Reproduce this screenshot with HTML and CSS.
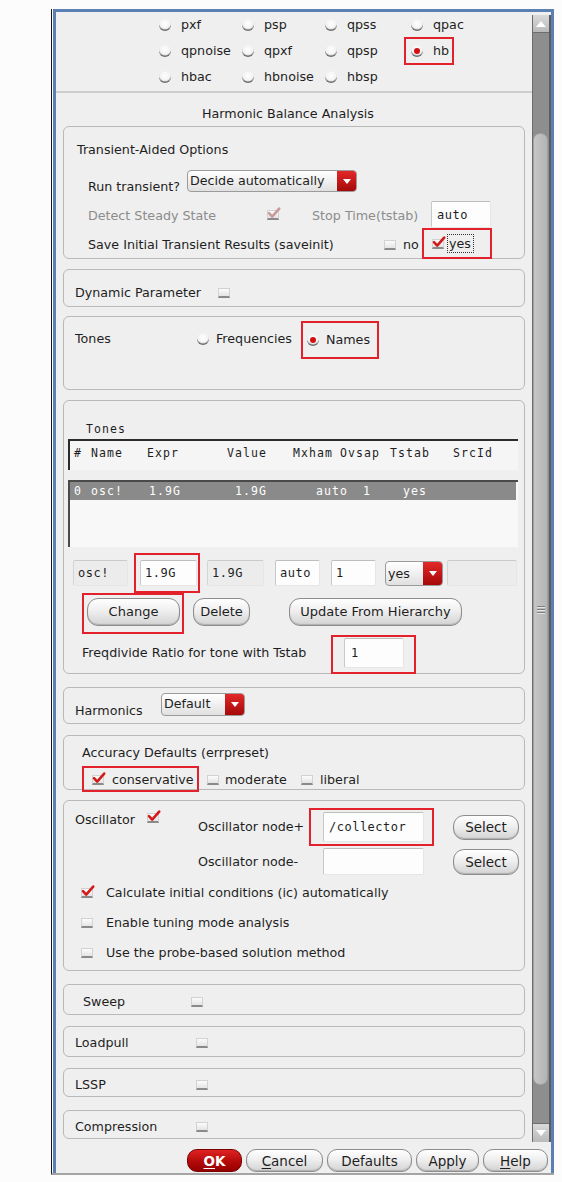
FILE: index.html
```html
<!DOCTYPE html>
<html>
<head>
<meta charset="utf-8">
<title>Harmonic Balance Analysis</title>
<link rel="stylesheet" href="styles.css">
</head>
<body>
<div class="frame">
 <div class="window">
  <div class="main">
   <div class="content">

    <div class="types">
     <div class="ropt"><span class="radio"></span>pxf</div>
     <div class="ropt"><span class="radio"></span>psp</div>
     <div class="ropt"><span class="radio"></span>qpss</div>
     <div class="ropt"><span class="radio"></span>qpac</div>
     <div class="ropt"><span class="radio"></span>qpnoise</div>
     <div class="ropt"><span class="radio"></span>qpxf</div>
     <div class="ropt"><span class="radio"></span>qpsp</div>
     <div class="ropt hl hl-hb"><span class="radio on"></span>hb</div>
     <div class="ropt"><span class="radio"></span>hbac</div>
     <div class="ropt"><span class="radio"></span>hbnoise</div>
     <div class="ropt"><span class="radio"></span>hbsp</div>
    </div>

    <div class="title">Harmonic Balance Analysis</div>

    <!-- Transient-aided options -->
    <div class="panel p-trans">
     <div class="trans-head">Transient-Aided Options</div>
     <div class="row run-row">
      <span class="run-lbl">Run transient?</span>
      <div class="dd dd-run"><span class="dd-text">Decide automatically</span><span class="dd-arrow"></span></div>
     </div>
     <div class="row detect-row">
      <span class="gray detect-lbl">Detect Steady State</span>
      <span class="cb checked disabled"><svg viewBox="0 0 14 12" width="14" height="12"><path d="M2 6.2 L5.2 9.6 L12.2 1.6" /></svg></span>
      <span class="gray stop-lbl">Stop Time(tstab)</span>
      <span class="inp inp-auto mono">auto</span>
     </div>
     <div class="row save-row">
      <span class="save-lbl">Save Initial Transient Results (saveinit)</span>
      <span class="cb"></span>
      <span class="no-lbl">no</span>
      <span class="hl hl-yes"><span class="cb checked"><svg viewBox="0 0 14 12" width="14" height="12"><path d="M2 6.2 L5.2 9.6 L12.2 1.6" /></svg></span><span class="focus">yes</span></span>
     </div>
    </div>

    <!-- Dynamic parameter -->
    <div class="panel p-dyn">
     <div class="row simple-row">
      <span class="dyn-lbl">Dynamic Parameter</span><span class="cb"></span>
     </div>
    </div>

    <!-- Tones selector -->
    <div class="panel p-tonesel">
     <div class="row simple-row">
      <span class="tones-lbl">Tones</span>
      <span class="radio"></span><span class="freq-lbl">Frequencies</span>
      <span class="hl hl-names"><span class="radio on"></span><span class="names-lbl">Names</span></span>
     </div>
    </div>

    <!-- Tones table -->
    <div class="panel p-table">
     <div class="mono-sm tbl-title">Tones</div>
     <div class="tbl-head mono-sm">
      <span>#</span><span>Name</span><span>Expr</span><span>Value</span><span>Mxham</span><span>Ovsap</span><span>Tstab</span><span>SrcId</span>
     </div>
     <div class="tbl-list">
      <div class="tbl-sel mono-sm">
       <span>0</span><span>osc!</span><span>1.9G</span><span>1.9G</span><span>auto</span><span>1</span><span>yes</span>
      </div>
     </div>
     <div class="row edit-row">
      <span class="inp off mono e-name">osc!</span>
      <span class="hl hl-expr"><span class="inp mono e-expr">1.9G</span></span>
      <span class="inp off mono e-val">1.9G</span>
      <span class="inp mono e-mx">auto</span>
      <span class="inp mono e-ov">1</span>
      <div class="dd dd-yes"><span class="dd-text">yes</span><span class="dd-arrow"></span></div>
      <span class="inp off e-src"></span>
     </div>
     <div class="row btn-row">
      <span class="hl hl-change"><span class="btn b-change">Change</span></span>
      <span class="btn b-delete">Delete</span>
      <span class="btn b-update">Update From Hierarchy</span>
     </div>
     <div class="row freq-row">
      <span class="fd-lbl">Freqdivide Ratio for tone with Tstab</span>
      <span class="hl hl-fd"><span class="inp mono e-fd">1</span></span>
     </div>
    </div>

    <!-- Harmonics -->
    <div class="panel p-harm">
     <div class="row harm-row">
      <span class="harm-lbl">Harmonics</span>
      <div class="dd dd-harm"><span class="dd-text">Default</span><span class="dd-arrow"></span></div>
     </div>
    </div>

    <!-- Accuracy -->
    <div class="panel p-acc">
     <div class="acc-head">Accuracy Defaults (errpreset)</div>
     <div class="row acc-row">
      <span class="hl hl-cons"><span class="cb checked"><svg viewBox="0 0 14 12" width="14" height="12"><path d="M2 6.2 L5.2 9.6 L12.2 1.6" /></svg></span><span class="cons-lbl">conservative</span></span>
      <span class="cb cb-mod"></span><span class="mod-lbl">moderate</span>
      <span class="cb"></span><span class="lib-lbl">liberal</span>
     </div>
    </div>

    <!-- Oscillator -->
    <div class="panel p-osc">
     <div class="row osc-top">
      <div class="osc-left">
       <span class="osc-lbl">Oscillator</span>
       <span class="cb checked osc-cb"><svg viewBox="0 0 14 12" width="14" height="12"><path d="M2 6.2 L5.2 9.6 L12.2 1.6" /></svg></span>
      </div>
      <div class="osc-grid">
       <span class="node-lbl">Oscillator node+</span>
       <span class="hl hl-node"><span class="inp mono e-node">/collector</span></span>
       <span class="btn b-select">Select</span>
       <span class="node-lbl">Oscillator node-</span>
       <span class="inp e-node2"></span>
       <span class="btn b-select b-select2">Select</span>
      </div>
     </div>
     <div class="row opt-row"><span class="cb checked"><svg viewBox="0 0 14 12" width="14" height="12"><path d="M2 6.2 L5.2 9.6 L12.2 1.6" /></svg></span><span class="opt-lbl">Calculate initial conditions (ic) automatically</span></div>
     <div class="row opt-row"><span class="cb"></span><span class="opt-lbl">Enable tuning mode analysis</span></div>
     <div class="row opt-row"><span class="cb"></span><span class="opt-lbl">Use the probe-based solution method</span></div>
    </div>

    <div class="panel p-sweep">
     <div class="row simple-row"><span class="sweep-lbl">Sweep</span><span class="cb"></span></div>
    </div>
    <div class="panel p-small p-load">
     <div class="row simple-row"><span class="small-lbl">Loadpull</span><span class="cb"></span></div>
    </div>
    <div class="panel p-small p-lssp">
     <div class="row simple-row"><span class="small-lbl">LSSP</span><span class="cb"></span></div>
    </div>
    <div class="panel p-small p-comp">
     <div class="row simple-row"><span class="small-lbl">Compression</span><span class="cb"></span></div>
    </div>

   </div>
   <div class="scrollbar">
    <div class="sb-btn sb-up"></div>
    <div class="sb-thumb"><span class="grip"></span><span class="grip"></span><span class="grip"></span></div>
    <div class="sb-btn sb-down"></div>
   </div>
  </div>
  <div class="footer">
   <span class="btn fb b-ok"><u>O</u>K</span>
   <span class="btn fb b-cancel"><u>C</u>ancel</span>
   <span class="btn fb b-def">Defaults</span>
   <span class="btn fb b-apply">Apply</span>
   <span class="btn fb b-help"><u>H</u>elp</span>
  </div>
 </div>
</div>
</body>
</html>
```

FILE: styles.css
```css
* { box-sizing: border-box; }
html, body { margin: 0; padding: 0; background: #fcfcfc; }
body {
  font-family: "DejaVu Sans", "Liberation Sans", sans-serif;
  font-size: 12.7px;
  line-height: 16px;
  color: #1e1e1e;
}

.frame {
  margin: 9px 0 0 51px;
  width: 503px;
  border-left: 1px solid #141414;
  padding-left: 1px;
  border-bottom: 2px solid #a4a4a4;
  background: #fcfcfc;
}
.window {
  height: 1164px;
  border: 3px solid #5b80b4;
  border-bottom: 0;
  background: #efefef;
  display: flex;
  flex-direction: column;
}
.main { display: flex; height: 1130px; }
.content { width: 476px; }

/* scrollbar */
.scrollbar {
  width: 19px;
  height: 1127px;
  margin-top: 3px;
  background: #8e8e8e;
  border-left: 1px solid #6c6c6c;
  border-right: 2px solid #5c5c5c;
  display: flex;
  flex-direction: column;
}
.sb-btn {
  height: 18px;
  background: linear-gradient(#dadada, #b9b9b9);
  border-bottom: 1px solid #6e6e6e;
  display: flex;
  align-items: center;
  justify-content: center;
}
.sb-up::after {
  content: "";
  border-left: 5px solid transparent;
  border-right: 5px solid transparent;
  border-bottom: 6px solid #ffffff;
}
.sb-down { margin-top: 38px; height: 19px; border-bottom: 0; border-top: 1px solid #6e6e6e; }
.sb-down::after {
  content: "";
  border-left: 5px solid transparent;
  border-right: 5px solid transparent;
  border-top: 6px solid #ffffff;
}
.sb-thumb {
  margin-top: 100px;
  height: 952px;
  width: 15px;
  border-radius: 7px;
  background: linear-gradient(90deg, #c6c6c6, #b4b4b4);
  border: 1px solid #a0a0a0;
  display: flex;
  flex-direction: column;
  align-items: center;
  justify-content: center;
  gap: 2px;
}
.grip { display: block; width: 8px; height: 1px; background: #7e7e7e; box-shadow: 0 1px 0 #e4e4e4; }

/* analysis types */
.types {
  height: 81px;
  border-bottom: 2px solid #cdcdcd;
  padding-left: 103px;
  padding-bottom: 1px;
  display: grid;
  grid-template-columns: 83px 83px 86px 60px;
  grid-auto-rows: 26px;
  align-items: center;
}
.ropt { display: flex; align-items: center; gap: 10px; }

.radio {
  display: inline-block;
  width: 12px;
  height: 12px;
  flex: none;
  border-radius: 50%;
  background: radial-gradient(circle at 50% 40%, #ffffff 0%, #f2f2f2 55%, #d4d4d4 100%);
  box-shadow: inset 0 -2px 1px -0.5px #6a6a6a;
  position: relative;
}
.radio.on::after {
  content: "";
  position: absolute;
  left: 3px; top: 3px;
  width: 6px; height: 6px;
  border-radius: 50%;
  background: #d40f12;
}

.hl { border: 2px solid #e3212d; }
.hl-hb { margin-left: -7px; padding-left: 5px; width: 50px; height: 28px; }

.title {
  height: 33px;
  padding-top: 13px;
  padding-right: 12px;
  text-align: center;
}

/* panels */
.panel {
  margin: 0 7px;
  border: 1px solid #b9b9b9;
  border-radius: 6px;
}
.row { display: flex; align-items: center; }

.p-trans { height: 133px; }
.p-dyn { height: 38px; margin-top: 10px; }
.p-tonesel { height: 74px; margin-top: 9px; }
.p-table { height: 274px; margin-top: 10px; }
.p-harm { height: 37px; margin-top: 13px; }
.p-acc { height: 55px; margin-top: 11px; }
.p-osc { height: 171px; margin-top: 10px; }
.p-sweep { height: 31px; margin-top: 13px; }
.p-load { height: 31px; margin-top: 11px; }
.p-lssp { height: 29px; margin-top: 11px; }
.p-comp { height: 29px; margin-top: 13px; }

.gray { color: #8c8c8c; }
.mono { font-family: "DejaVu Sans Mono", "Liberation Mono", monospace; font-size: 12px; letter-spacing: 0.5px; }
.mono-sm { font-family: "DejaVu Sans Mono", "Liberation Mono", monospace; font-size: 11.5px; letter-spacing: 1.1px; }

/* checkbox */
.cb {
  display: inline-block;
  position: relative;
  flex: none;
  width: 12px;
  height: 10px;
  background: linear-gradient(#fbfbfb, #e4e4e4);
  border: 1px solid #d2d2d2;
  border-bottom: 2px solid #8a8a8a;
}
.cb svg { position: absolute; left: -1px; top: -4px; overflow: visible; }
.cb svg path { fill: none; stroke: #d31a1a; stroke-width: 2.6; stroke-linecap: round; stroke-linejoin: round; }
.cb.disabled svg path { stroke: #c99a9a; }

/* inputs */
.inp {
  display: inline-flex;
  align-items: center;
  flex: none;
  height: 26px;
  padding-left: 4px;
  background: #fdfdfd;
  border: 1px solid #e6e6e6;
  border-top: 1px solid #bdbdbd;
  border-left: 1px solid #c8c8c8;
  border-radius: 2px;
}
.inp.off { background: #ececec; border-top-color: #cacaca; border-left-color: #d4d4d4; }

/* dropdown */
.dd {
  display: flex;
  flex: none;
  height: 22px;
  border: 1px solid #9b9b9b;
  border-radius: 4px;
  background: linear-gradient(#ffffff, #e0e0e0);
  overflow: hidden;
}
.dd-text { flex: 1; padding-left: 2px; line-height: 20px; white-space: nowrap; overflow: hidden; }
.dd-arrow {
  width: 19px;
  flex: none;
  background: linear-gradient(#e32828, #a50909);
  display: flex;
  align-items: center;
  justify-content: center;
}
.dd-arrow::after {
  content: "";
  border-left: 4px solid transparent;
  border-right: 4px solid transparent;
  border-top: 5px solid #ffffff;
}

/* buttons */
.btn {
  display: inline-flex;
  flex: none;
  align-items: center;
  justify-content: center;
  height: 28px;
  border: 1px solid #8d8d8d;
  border-radius: 11px;
  background: linear-gradient(#ffffff 0%, #efefef 45%, #d3d3d3 100%);
  box-shadow: inset 0 -1px 1px #b0b0b0;
  font-size: 13px;
  white-space: nowrap;
}

/* P1 */
.trans-head { padding: 15px 0 0 13px; }
.run-row { margin: 12px 0 0 24px; height: 22px; align-items: flex-start; }
.run-lbl { width: 99px; margin-top: 9px; }
.dd-run { width: 170px; }
.detect-row { margin: 9px 0 0 24px; height: 27px; }
.detect-lbl { width: 179px; padding-top: 2px; }
.stop-lbl { width: 119px; margin-left: 33px; padding-top: 2px; }
.inp-auto { width: 60px; height: 27px; padding-left: 5px; }
.save-row { margin: 4px 0 0 24px; height: 26px; }
.save-lbl { width: 296px; }
.no-lbl { margin-left: 7px; width: 15px; }
.hl-yes {
  align-self: flex-start;
  margin: -4px 0 0 4px;
  width: 70px;
  height: 31px;
  padding-left: 8px;
  display: flex;
  align-items: center;
}
.focus { margin-left: 3px; border: 1px dotted #333; padding: 0 2px 0 1px; line-height: 17px; }

/* P2 / simple rows */
.simple-row { padding-top: 15px; padding-left: 11px; }
.dyn-lbl { width: 143px; }

/* P3 */
.p-tonesel .simple-row { padding-top: 14px; align-items: flex-start; }
.tones-lbl { width: 122px; }
.freq-lbl { margin-left: 7px; width: 85px; }
.hl-names {
  display: flex;
  align-items: center;
  height: 38px;
  width: 78px;
  padding-left: 4px;
  margin-top: -10px;
  align-self: flex-start;
}
.p-tonesel .simple-row > .radio { margin-top: 2px; }
.names-lbl { margin-left: 7px; }

/* P4 table */
.tbl-title { padding: 20px 0 0 22px; }
.tbl-head {
  margin: 2px 0 0 4px;
  width: 450px;
  height: 31px;
  border-top: 2px solid #2b2b2b;
  border-left: 2px solid #2b2b2b;
  background: #f5f5f5;
  padding: 4px 0 0 4px;
  display: grid;
  grid-template-columns: 17px 56px 80px 66px 47px 50px 63px auto;
}
.tbl-list {
  margin: 10px 0 0 4px;
  width: 450px;
  height: 67px;
  border-top: 2px solid #4a4a4a;
  border-left: 2px solid #4a4a4a;
  background: #f8f8f8;
}
.tbl-sel {
  height: 18px;
  width: 446px;
  line-height: 18px;
  background: #8a8a8a;
  color: #ffffff;
  padding-left: 4px;
  display: grid;
  grid-template-columns: 17px 58px 86px 81px 47px 40px auto;
}
.edit-row { margin: 13px 0 0 9px; height: 26px; }
.e-name { width: 55px; }
.hl-expr {
  margin: 0 0 0 6px;
  width: 66px;
  height: 40px;
  padding: 5px 0 0 4px;
  align-self: flex-start;
  margin-top: -7px;
}
.e-expr { width: 57px; }
.e-val { width: 57px; margin-left: 7px; }
.e-mx { width: 45px; margin-left: 11px; }
.e-ov { width: 45px; margin-left: 11px; }
.dd-yes { width: 58px; margin-left: 9px; height: 25px; }
.dd-yes .dd-text { line-height: 23px; }
.e-src { width: 70px; margin-left: 4px; }

.btn-row { margin: 12px 0 0 18px; height: 28px; }
.hl-change {
  align-self: flex-start;
  margin-top: -5px;
  width: 102px;
  height: 41px;
  padding: 3px 0 0 3px;
}
.b-change { width: 93px; }
.b-delete { width: 57px; margin-left: 9px; }
.b-update { width: 173px; margin-left: 39px; }

.freq-row { margin: 12px 0 0 18px; height: 30px; }
.fd-lbl { width: 249px; }
.hl-fd {
  align-self: flex-start;
  margin-top: -3px;
  width: 85px;
  height: 39px;
  padding: 1px 0 0 11px;
}
.e-fd { width: 60px; height: 30px; padding-left: 6px; }

/* P5 */
.harm-row { padding: 5px 0 0 11px; align-items: flex-start; }
.harm-lbl { width: 86px; margin-top: 10px; }
.dd-harm { width: 84px; height: 23px; }

/* P6 */
.acc-head { padding: 9px 0 0 18px; }
.acc-row { margin: 11px 0 0 18px; height: 16px; }
.hl-cons {
  display: flex;
  align-items: center;
  align-self: flex-start;
  margin-top: -6px;
  width: 117px;
  height: 26px;
  padding: 2px 0 0 8px;
}
.cons-lbl { margin-left: 8px; }
.cb-mod { margin-left: 8px; }
.mod-lbl { margin-left: 6px; width: 76px; }
.lib-lbl { margin-left: 7px; }

/* P7 */
.osc-top { padding: 11px 0 0 11px; align-items: flex-start; }
.osc-left { width: 123px; display: flex; align-items: flex-start; }
.osc-lbl { width: 72px; }
.osc-cb { margin-top: 1px; }
.osc-grid {
  display: grid;
  grid-template-columns: 111px 144px 66px;
  grid-template-rows: 30px 27px;
  row-gap: 6px;
  align-items: center;
}
.hl-node {
  align-self: start;
  margin: -4px 0 0 0;
  width: 125px;
  height: 38px;
  padding: 2px 0 0 12px;
}
.e-node { width: 101px; height: 30px; padding-left: 5px; }
.e-node2 { width: 101px; height: 27px; margin-left: 14px; }
.b-select { width: 66px; height: 25px; font-size: 13.5px; }
.b-select2 { height: 26px; }
.opt-row { margin-left: 17px; height: 30px; }
.osc-top + .opt-row { margin-top: 3px; }
.opt-lbl { margin-left: 13px; }

/* P8-P11 */
.p-sweep .simple-row { padding-top: 9px; padding-left: 19px; }
.sweep-lbl { width: 108px; }
.p-small .simple-row { padding-top: 8px; }
.small-lbl { width: 121px; }

/* footer */
.footer {
  height: 31px;
  padding: 7px 3px 0 0;
  display: flex;
  justify-content: flex-end;
  gap: 4px;
}
.fb { height: 23px; font-size: 13.5px; border-radius: 10px; }
.fb u { text-underline-offset: 2px; }
.b-ok {
  width: 55px;
  background: linear-gradient(#e02222, #b00808 60%, #950000);
  border-color: #7a0000;
  color: #ffffff;
  font-weight: bold;
  box-shadow: none;
}
.b-cancel { width: 77px; }
.b-def { width: 85px; }
.b-apply { width: 63px; }
.b-help { width: 65px; }
```
